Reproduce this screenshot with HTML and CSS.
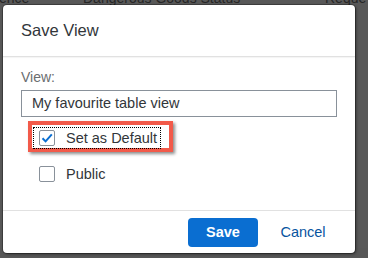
FILE: index.html
```html
<!DOCTYPE html>
<html>
<head>
<meta charset="utf-8">
<link rel="stylesheet" href="styles.css">
</head>
<body>
<div class="backdrop">
  <div class="table-head">
    <span class="col c1">ence</span>
    <span class="col c2">Dangerous Goods Status</span>
    <span class="col c3">Reque</span>
  </div>
</div>
<div class="dialog">
  <div class="dlg-header">Save View</div>
  <div class="dlg-content">
    <label class="field-label">View:</label>
    <div class="input">My favourite table view</div>
    <div class="cb-row">
      <div class="highlight"></div>
      <div class="focus">
        <span class="cb checked">
          <svg width="14" height="14" viewBox="0 0 14 14"><path d="M2.5 7.2 L5.6 10.4 L11.8 3.4" fill="none" stroke="#0a6ed1" stroke-width="2"/></svg>
        </span>
        <span class="cb-text">Set as Default</span>
      </div>
    </div>
    <div class="cb-row">
      <div class="plain">
        <span class="cb"></span>
        <span class="cb-text">Public</span>
      </div>
    </div>
  </div>
  <div class="dlg-footer">
    <button class="btn primary">Save</button>
    <button class="btn ghost">Cancel</button>
  </div>
</div>
</body>
</html>
```
FILE: styles.css
```css
html, body {
  margin: 0;
  padding: 0;
}
body {
  width: 368px;
  height: 258px;
  background: #575757;
  font-family: "Liberation Sans", Arial, sans-serif;
  overflow: hidden;
  position: relative;
}
.backdrop {
  height: 258px;
  background: #585858;
}
.table-head {
  position: relative;
  height: 16px;
  margin-top: -10px;
  font-size: 14px;
  line-height: 16px;
  color: #262626;
  white-space: nowrap;
}
.col {
  position: absolute;
  top: 0;
}
.c1 { left: -1px; }
.c2 { left: 83px; }
.c3 { left: 325px; }

.dialog {
  position: absolute;
  left: 3px;
  top: 5px;
  width: 352px;
  height: 248px;
  background: #fff;
  border-radius: 4px;
  box-shadow: 0 0 0 1px rgba(0,0,0,0.25), 1px 1px 3px rgba(0,0,0,0.5);
  display: flex;
  flex-direction: column;
}
.dlg-header {
  height: 51px;
  flex: none;
  display: flex;
  align-items: center;
  padding-left: 18px;
  font-size: 16.5px;
  color: #32363a;
  border-bottom: 1px solid #e1e1e1;
  box-shadow: 0 1px 1px rgba(0,0,0,0.04);
}
.dlg-content {
  flex: 1;
  padding: 11px 18px 0 18px;
}
.field-label {
  display: block;
  font-size: 14px;
  line-height: 18px;
  color: #6a6d70;
  margin-bottom: 4px;
}
.input {
  height: 25px;
  border: 1px solid #89919a;
  font-size: 14.5px;
  line-height: 25px;
  padding-left: 10px;
  color: #32363a;
  margin-bottom: 3px;
}
.cb-row {
  position: relative;
  height: 36px;
  display: flex;
  align-items: center;
}
.highlight {
  position: absolute;
  left: 7px;
  top: 1px;
  width: 137px;
  height: 23px;
  border: 4px solid #f25a4a;
  box-shadow: 2px 2px 3px rgba(0,0,0,0.45);
}
.focus, .plain {
  display: flex;
  align-items: center;
  margin-left: 13px;
  width: 126px;
  height: 20px;
  box-sizing: border-box;
  padding-left: 5px;
}
.focus {
  outline: 1px dotted #000;
  position: relative;
}
.cb {
  width: 14px;
  height: 14px;
  border: 1px solid #89919a;
  border-radius: 2px;
  background: #fff;
  display: inline-flex;
  align-items: center;
  justify-content: center;
  flex: none;
}
.cb-text {
  margin-left: 11px;
  font-size: 14.5px;
  color: #32363a;
}
.dlg-footer {
  height: 42px;
  flex: none;
  border-top: 1px solid #e1e1e1;
  display: flex;
  align-items: center;
  justify-content: flex-end;
  padding-right: 17px;
  gap: 10px;
}
.btn {
  font-family: "Liberation Sans", Arial, sans-serif;
  font-size: 14.5px;
  width: 70px;
  height: 29px;
  border-radius: 4px;
  border: none;
  padding: 0;
  cursor: pointer;
}
.primary {
  background: #0a6ed1;
  color: #fff;
  font-weight: bold;
}
.ghost {
  background: transparent;
  color: #0854a0;
}
```
